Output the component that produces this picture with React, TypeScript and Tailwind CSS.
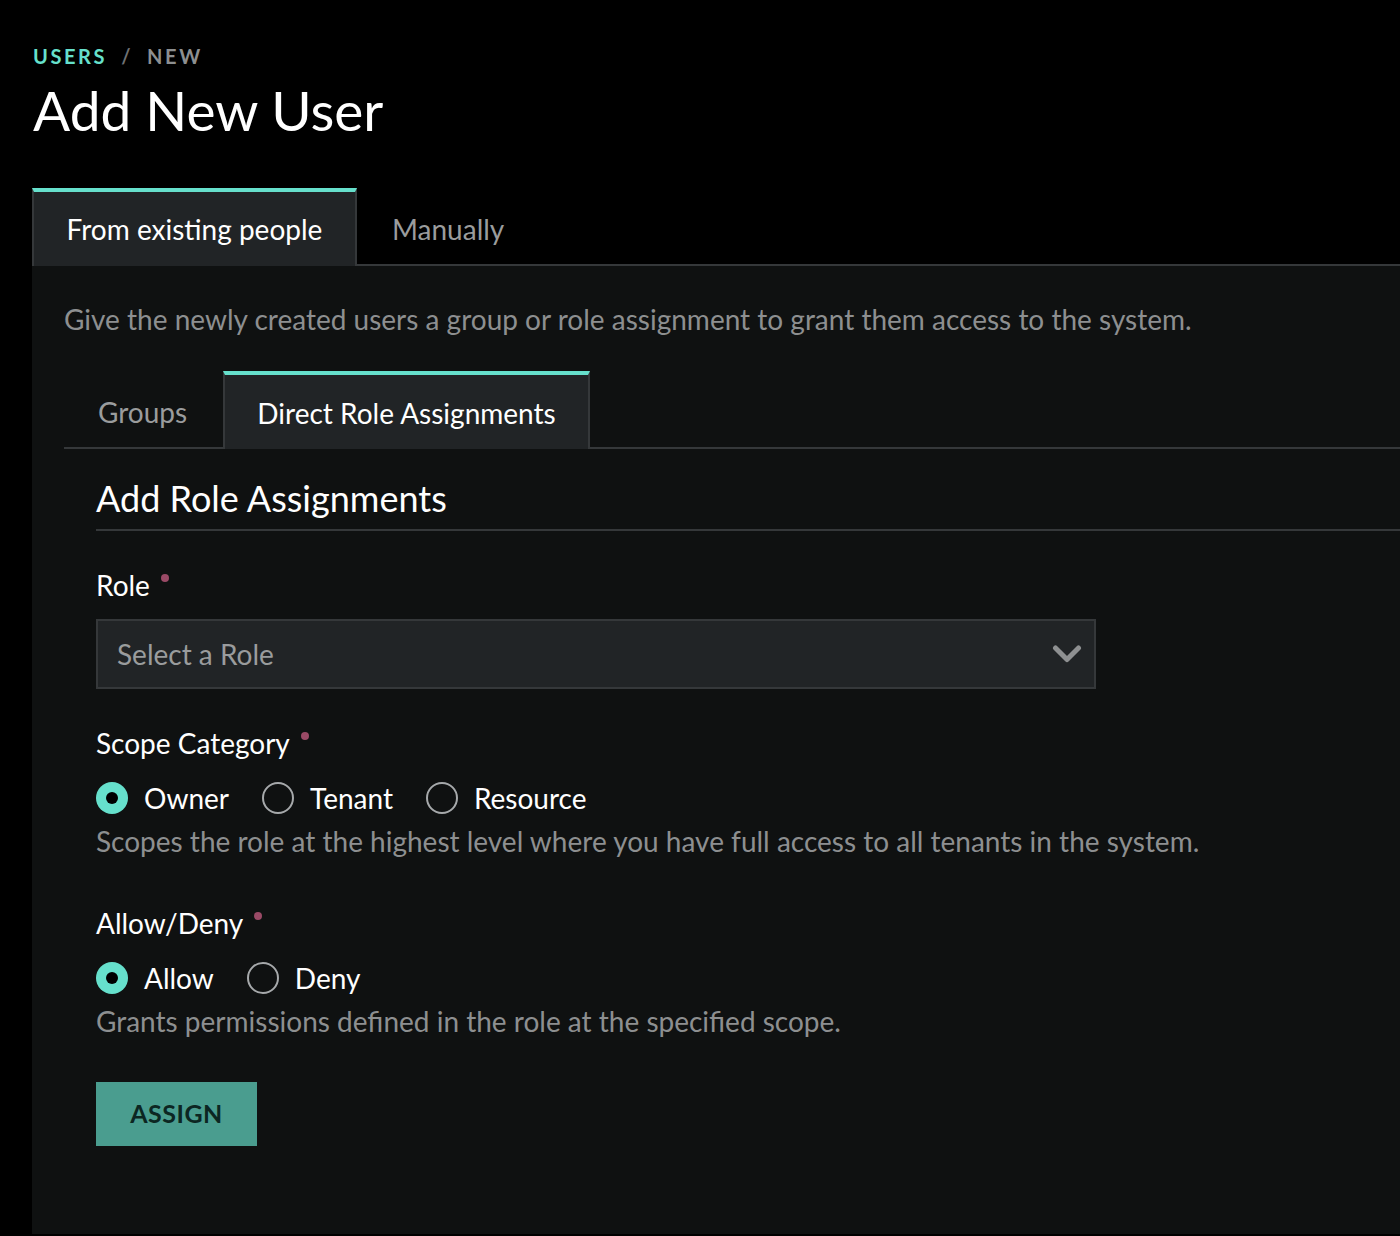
const font = { fontFamily: "Lato, 'Noto Sans', sans-serif" };

function Required() {
  return <span className="mb-[14px] ml-[11px] inline-block h-[8px] w-[8px] rounded-full bg-[#9a4a66]" />;
}

function Radio({ label, checked }: { label: string; checked?: boolean }) {
  return (
    <label className="mr-[33px] flex items-center gap-[16px]">
      {checked ? (
        <span className="flex h-[32px] w-[32px] items-center justify-center rounded-full bg-[#66e0cc]">
          <span className="h-[12px] w-[12px] rounded-full bg-black" />
        </span>
      ) : (
        <span className="h-[32px] w-[32px] rounded-full border-2 border-[#a6a9ab]" />
      )}
      <span className="text-[28px] leading-[34px] text-white">{label}</span>
    </label>
  );
}

function Field({
  label,
  options,
  hint,
}: {
  label: string;
  options: { label: string; checked?: boolean }[];
  hint: string;
}) {
  return (
    <div>
      <div className="flex items-center text-[28px] leading-[34px] text-white">
        {label}
        <Required />
      </div>
      <div className="mt-[21px] flex items-center">
        {options.map((o) => (
          <Radio key={o.label} label={o.label} checked={o.checked} />
        ))}
      </div>
      <p className="mt-[9px] text-[28px] leading-[34px] text-[#8d8f90]">{hint}</p>
    </div>
  );
}

export default function App() {
  return (
    <div className="min-h-[1236px] bg-black text-white" style={font}>
      <div className="px-[33px] pt-[44px]">
        <div className="flex items-center gap-[14px] text-[20px] leading-[24px] font-bold tracking-[0.13em]">
          <span className="text-[#66e0cc]">USERS</span>
          <span className="text-[#6f7173]">/</span>
          <span className="text-[#8d8f90]">NEW</span>
        </div>
        <h1 className="mt-[10px] text-[55px] leading-[64px] font-normal">Add New User</h1>
      </div>

      <div className="ml-[32px] mt-[46px]">
        {/* outer tabs */}
        <div className="flex border-b-2 border-[#35383a]">
          <div className="-mb-[2px] flex h-[78px] w-[325px] items-center justify-center border-x-2 border-t-[4px] border-x-[#35383a] border-t-[#66e0cc] bg-[#212426] text-[28px] text-white">
            From existing people
          </div>
          <div className="flex h-[76px] items-center px-[35px] pt-[5px] text-[28px] text-[#9a9c9d]">Manually</div>
        </div>

        {/* panel */}
        <div className="min-h-[968px] bg-[#0f1111] pl-[32px] pt-[36px]">
          <p className="text-[28px] leading-[34px] text-[#8d8f90]">
            Give the newly created users a group or role assignment to grant them access to the system.
          </p>

          {/* inner tabs */}
          <div className="mt-[35px] flex border-b-2 border-[#35383a]">
            <div className="flex h-[76px] w-[159px] items-center pl-[34px] pt-[5px] text-[28px] text-[#9a9c9d]">Groups</div>
            <div className="-mb-[2px] flex h-[78px] w-[367px] items-center justify-center border-x-2 border-t-[4px] border-x-[#35383a] border-t-[#66e0cc] bg-[#212426] pt-[1px] text-[28px] text-white">
              Direct Role Assignments
            </div>
          </div>

          <div className="pl-[32px]">
            <h2 className="border-b-2 border-[#35383a] pb-[10px] pt-[28px] text-[36px] leading-[42px] text-white">
              Add Role Assignments
            </h2>

            <div className="mt-[37px] flex items-center text-[28px] leading-[34px] text-white">
              Role
              <Required />
            </div>
            <div className="mt-[17px] flex h-[70px] w-[1000px] items-center justify-between border-2 border-[#35383a] bg-[#212426] pl-[19px] pr-[12px]">
              <span className="text-[28px] text-[#9a9c9d]">Select a Role</span>
              <svg width="30" height="20" viewBox="0 0 30 20" fill="none">
                <polyline
                  points="3.5,4 15,15.5 26.5,4"
                  stroke="#8e9091"
                  strokeWidth="5"
                  strokeLinecap="round"
                  strokeLinejoin="round"
                />
              </svg>
            </div>

            <div className="mt-[37px]">
              <Field
                label="Scope Category"
                options={[{ label: "Owner", checked: true }, { label: "Tenant" }, { label: "Resource" }]}
                hint="Scopes the role at the highest level where you have full access to all tenants in the system."
              />
            </div>

            <div className="mt-[48px]">
              <Field
                label="Allow/Deny"
                options={[{ label: "Allow", checked: true }, { label: "Deny" }]}
                hint="Grants permissions defined in the role at the specified scope."
              />
            </div>

            <button className="mt-[44px] flex h-[64px] w-[161px] items-center justify-center bg-[#4a9d8f] text-[25px] font-bold tracking-[0.02em] text-[#0c2622]">
              ASSIGN
            </button>
          </div>
        </div>
      </div>
    </div>
  );
}
